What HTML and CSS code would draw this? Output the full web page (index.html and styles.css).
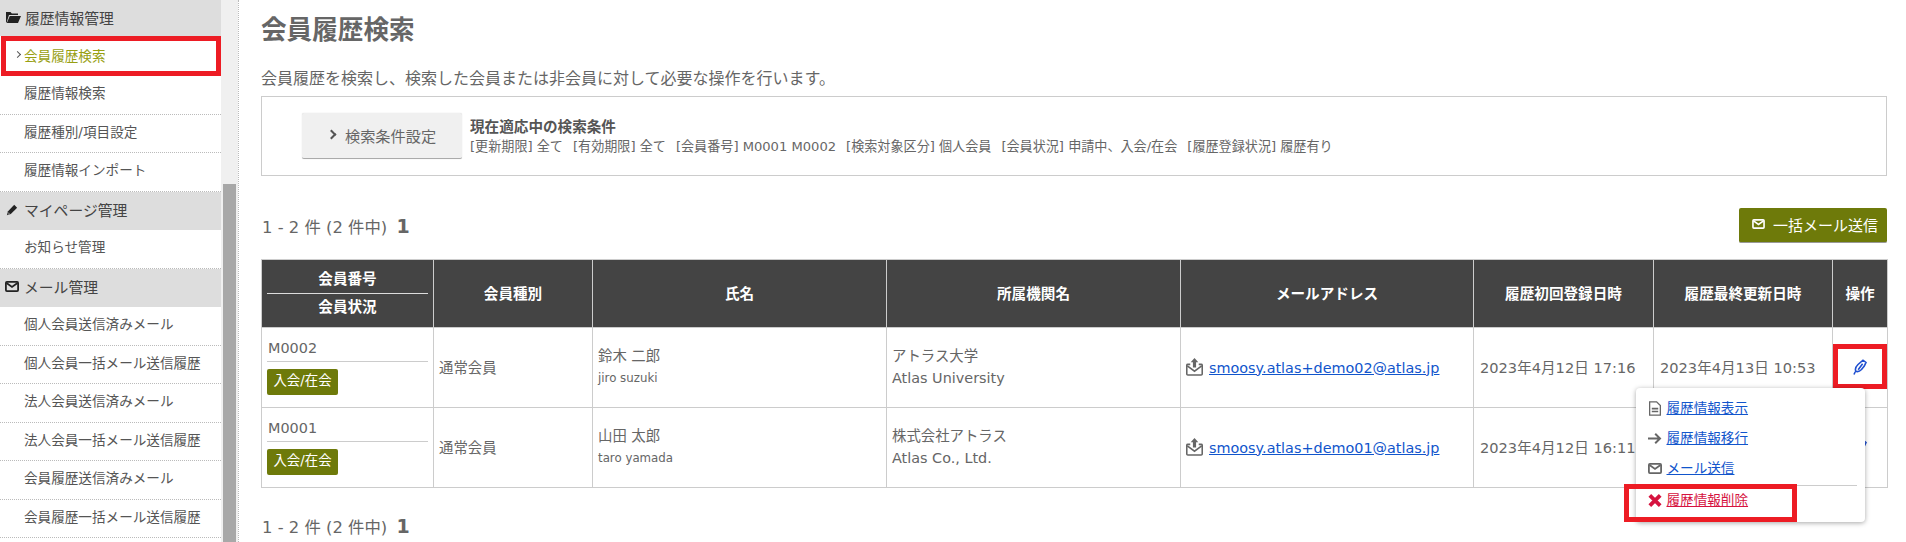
FILE: index.html
```html
<!DOCTYPE html>
<html lang="ja">
<head>
<meta charset="utf-8">
<title>会員履歴検索</title>
<link rel="stylesheet" href="styles.css">
</head>
<body>
<svg class="defs" width="0" height="0" aria-hidden="true">
  <symbol id="i-folder" viewBox="0 0 16 14"><path d="M1 12.5V2h4.5l1.3 1.5H13V5H4L1.6 12.5zM4.8 6H16l-3 7H1.8z" fill="currentColor"/></symbol>
  <symbol id="i-pencil" viewBox="0 0 14 14"><path d="M9.6 1l3.4 3.4-7.4 7.4L1 13.2l1.4-4.8z" fill="currentColor"/><path d="M2 12.4l1-3 2.2 2.2z" fill="#fff" opacity=".35"/></symbol>
  <symbol id="i-mail" viewBox="0 0 14 11"><rect x=".9" y=".9" width="12.2" height="9.2" rx="1" fill="none" stroke="currentColor" stroke-width="1.8"/><path d="M1.5 2l5.5 4 5.5-4" fill="none" stroke="currentColor" stroke-width="1.8"/></symbol>
  <symbol id="i-send" viewBox="0 0 16 17"><path d="M4 6H1.7a1 1 0 0 0-1 1v8a1 1 0 0 0 1 1h12.6a1 1 0 0 0 1-1V7a1 1 0 0 0-1-1H12" fill="none" stroke="currentColor" stroke-width="1.5"/><path d="M1.2 7.5L8 12.5l6.8-5" fill="none" stroke="currentColor" stroke-width="1.5"/><path d="M8 0l3.6 4H9.5v5h-3V4H4.4z" fill="currentColor"/></symbol>
  <symbol id="i-quill" viewBox="0 0 14 16"><path d="M1 15.5C1.5 14 2 13 3 12M2.6 11.4C2 9.5 3 7.5 5 5.5L10 1.2 13 3.4 11.3 7 8.5 10.5C6.5 12.5 4.5 13 2.9 12.3zM5.2 10.8L9.6 4.8" fill="none" stroke="currentColor" stroke-width="1.6"/></symbol>
  <symbol id="i-file" viewBox="0 0 12 14"><path d="M1 .8h6.5L11 4.3v8.9H1z" fill="none" stroke="currentColor" stroke-width="1.2"/><path d="M3 7.2h6M3 9.8h6" stroke="currentColor" stroke-width="1.6"/></symbol>
  <symbol id="i-arrow" viewBox="0 0 14 12"><path d="M0 6h11.5M7.2 1.2L12 6l-4.8 4.8" fill="none" stroke="currentColor" stroke-width="2"/></symbol>
  <symbol id="i-x" viewBox="0 0 14 14"><path d="M1.8 1.8l10.4 10.4M12.2 1.8L1.8 12.2" fill="none" stroke="currentColor" stroke-width="3.8"/></symbol>
</svg>
<div class="page">
  <nav class="sidebar">
    <div class="nav-head nav-head-first"><svg class="nav-icon folder"><use href="#i-folder"/></svg>履歴情報管理</div>
    <a class="nav-item active"><span class="chev"></span>会員履歴検索</a>
    <a class="nav-item">履歴情報検索</a>
    <a class="nav-item">履歴種別/項目設定</a>
    <a class="nav-item">履歴情報インポート</a>
    <div class="nav-head"><svg class="nav-icon pencil"><use href="#i-pencil"/></svg>マイページ管理</div>
    <a class="nav-item">お知らせ管理</a>
    <div class="nav-head"><svg class="nav-icon mail"><use href="#i-mail"/></svg>メール管理</div>
    <a class="nav-item">個人会員送信済みメール</a>
    <a class="nav-item">個人会員一括メール送信履歴</a>
    <a class="nav-item">法人会員送信済みメール</a>
    <a class="nav-item">法人会員一括メール送信履歴</a>
    <a class="nav-item">会員履歴送信済みメール</a>
    <a class="nav-item">会員履歴一括メール送信履歴</a>
  </nav>
  <div class="scroll"><div class="thumb"></div></div>
  <main class="main">
    <h1 class="title">会員履歴検索</h1>
    <p class="desc">会員履歴を検索し、検索した会員または非会員に対して必要な操作を行います。</p>
    <section class="cond">
      <button class="cond-btn"><span class="cond-chev"></span>検索条件設定</button>
      <div class="cond-text">
        <div class="cond-title">現在適応中の検索条件</div>
        <div class="cond-list"><span>[更新期限] 全て</span><span>[有効期限] 全て</span><span>[会員番号] M0001 M0002</span><span>[検索対象区分] 個人会員</span><span>[会員状況] 申請中、入会/在会</span><span>[履歴登録状況] 履歴有り</span></div>
      </div>
    </section>
    <div class="pager pager-top">
      <div class="count">1 - 2 件 (2 件中) <b class="pagenum">1</b></div>
      <button class="mail-btn"><svg class="mail-btn-icon"><use href="#i-mail"/></svg>一括メール送信</button>
    </div>
    <table class="grid">
      <colgroup><col class="c1"><col class="c2"><col class="c3"><col class="c4"><col class="c5"><col class="c6"><col class="c7"><col class="c8"></colgroup>
      <thead>
        <tr>
          <th><div class="th-top">会員番号</div><div class="th-bot">会員状況</div></th>
          <th>会員種別</th><th>氏名</th><th>所属機関名</th><th>メールアドレス</th><th>履歴初回登録日時</th><th>履歴最終更新日時</th><th>操作</th>
        </tr>
      </thead>
      <tbody>
        <tr>
          <td class="id-cell"><div class="mid">M0002</div><span class="badge">入会/在会</span></td>
          <td>通常会員</td>
          <td class="two"><div>鈴木 二郎</div><div class="sub">jiro suzuki</div></td>
          <td class="two"><div>アトラス大学</div><div>Atlas University</div></td>
          <td><svg class="send"><use href="#i-send"/></svg><a class="link">smoosy.atlas+demo02@atlas.jp</a></td>
          <td class="date">2023年4月12日 17:16</td>
          <td class="date">2023年4月13日 10:53</td>
          <td class="ops"><svg class="quill"><use href="#i-quill"/></svg><span class="mark-ops"></span>
            <div class="menu">
              <div class="menu-item"><svg class="mi file"><use href="#i-file"/></svg><a class="link">履歴情報表示</a></div>
              <div class="menu-item"><svg class="mi arrow"><use href="#i-arrow"/></svg><a class="link">履歴情報移行</a></div>
              <div class="menu-item"><svg class="mi envelope"><use href="#i-mail"/></svg><a class="link">メール送信</a></div>
              <div class="menu-sep"></div>
              <div class="menu-item danger"><svg class="mi cross"><use href="#i-x"/></svg><a class="link">履歴情報削除</a></div>
              <span class="mark-del"></span>
            </div>
          </td>
        </tr>
        <tr>
          <td class="id-cell"><div class="mid">M0001</div><span class="badge">入会/在会</span></td>
          <td>通常会員</td>
          <td class="two"><div>山田 太郎</div><div class="sub">taro yamada</div></td>
          <td class="two"><div>株式会社アトラス</div><div>Atlas Co., Ltd.</div></td>
          <td><svg class="send"><use href="#i-send"/></svg><a class="link">smoosy.atlas+demo01@atlas.jp</a></td>
          <td class="date">2023年4月12日 16:11</td>
          <td class="date">2023年4月13日 10:53</td>
          <td class="ops"><svg class="quill"><use href="#i-quill"/></svg></td>
        </tr>
      </tbody>
    </table>
    <div class="count count-bottom">1 - 2 件 (2 件中) <b class="pagenum">1</b></div>
  </main>
</div>
</body>
</html>
```
FILE: styles.css
```css
* { box-sizing: border-box; }
html, body { margin: 0; height: 542px; overflow: hidden; background: #fff; }
body { font-family: "DejaVu Sans", "Noto Sans CJK JP", sans-serif; color: #666; }
.defs { position: absolute; }
.page { display: flex; height: 542px; }

.sidebar { width: 221px; flex: none; font-size: 13.6px; color: #555; }
.nav-head { display: flex; align-items: center; height: 38.5px; padding-bottom: 2px; background: #ddd; font-size: 14.8px; color: #444; }
.nav-head-first { height: 36px; }
.nav-icon { flex: none; color: #222; }
.folder { width: 16px; height: 14px; margin: 0 4px 0 5px; }
.pencil { width: 12px; height: 12px; margin: 0 6px 0 6px; }
.mail { width: 14px; height: 11px; margin: 0 5px 0 5px; }
.nav-item { display: flex; align-items: center; height: 38.5px; padding: 0 0 5.5px 24px; border-bottom: 1px dotted #bbb; white-space: nowrap; }
.active { height: 40px; margin-left: 1px; padding: 0 0 3px 9px; border: 5px solid #ed1c24; color: #98a012; }
.chev { width: 5px; height: 5px; margin-right: 4px; border-top: 1px solid #555; border-right: 1px solid #555; transform: rotate(45deg); }

.scroll { width: 17px; flex: none; background: #f0f0f0; padding: 184px 2px 0; }
.thumb { height: 358px; background: #a8a8a8; }

.main { flex: 1; min-width: 0; border-left: 1px dotted #bbb; padding: 12px 19px 0 22px; }
.title { margin: 0 0 20px; font-size: 25.6px; line-height: 36px; font-weight: 700; color: #666; }
.desc { margin: 0 0 6px; font-size: 16px; line-height: 22px; }

.cond { display: flex; align-items: center; height: 80px; border: 1px solid #ccc; padding-left: 40px; }
.cond-btn { display: flex; align-items: center; justify-content: center; width: 160px; height: 46px; margin-right: 8px; padding: 0 0 2px; border: 0; border-bottom: 1px solid #aaa; border-radius: 2px; background: #f0f0f0; color: #666; font: inherit; font-size: 15.2px; box-shadow: 0 0 1px #ccc; }
.cond-chev { width: 7px; height: 7px; margin-right: 10px; border-top: 2px solid #555; border-right: 2px solid #555; transform: rotate(45deg); }
.cond-title { font-size: 14.6px; font-weight: 700; line-height: 20px; color: #555; margin-bottom: 1px; }
.cond-list { display: flex; gap: 10px; font-size: 13.1px; line-height: 18px; white-space: nowrap; }

.pager { display: flex; justify-content: space-between; align-items: center; }
.pager-top { margin-top: 32px; height: 35px; }
.count { font-size: 16.4px; line-height: 26px; padding: 2px 0 0 1px; }
.pagenum { font-size: 19px; margin-left: 4px; }
.mail-btn { display: flex; align-items: center; width: 148px; height: 35px; padding: 0 0 2px 13px; border: 0; border-bottom: 1px solid #999; border-radius: 2px; background: #6e7a0a; color: #fff; font: inherit; font-size: 15px; }
.mail-btn-icon { width: 13px; height: 10px; margin-right: 8px; }

.grid { width: 1626px; margin-top: 16px; border-collapse: collapse; table-layout: fixed; font-size: 14.4px; }
.c1 { width: 172px; } .c2 { width: 159px; } .c3 { width: 294px; } .c4 { width: 294px; }
.c5 { width: 293px; } .c6 { width: 180px; } .c7 { width: 179px; } .c8 { width: 55px; }
.grid th, .grid td { border: 1px solid #ccc; }
.grid th { height: 68px; padding: 0 5px 2px; background: #444; color: #fff; font-weight: 700; font-size: 14.6px; text-align: center; }
.th-top { padding-bottom: 2px; line-height: 24px; border-bottom: 1px solid #ddd; }
.th-bot { padding-top: 1px; line-height: 24px; }
.grid td { height: 80px; padding: 0 5px; line-height: 22px; white-space: nowrap; }
.grid td.id-cell { padding-bottom: 6px; }
.grid td.two { padding-bottom: 1px; }
.grid td.date { padding-left: 6px; font-size: 14.6px; }
.id-cell .mid { height: 28px; padding: 3px 0 0 1px; border-bottom: 1px solid #ccc; margin-bottom: 7px; font-size: 14.4px; }
.badge { display: block; width: 71px; height: 26px; border-radius: 2px; background: #6e7a0a; color: #fff; font-size: 13.4px; line-height: 24px; text-align: center; }
.sub { font-size: 11.8px; }
.link { color: #1155cc; text-decoration: underline; }
.send { width: 17px; height: 18px; margin-right: 6px; color: #666; vertical-align: -3px; }
.grid td.ops { position: relative; text-align: center; padding-bottom: 4px; }
.quill { width: 14px; height: 16px; color: #1f4fd0; vertical-align: middle; }
.mark-ops { position: absolute; left: 0; top: 16px; width: 54px; height: 45px; border: 5px solid #ed1c24; }

.menu { position: absolute; z-index: 5; top: 60px; right: 22px; width: 229px; height: 134px; padding-top: 6px; background: #fff; border-radius: 4px; box-shadow: 0 1px 5px rgba(0,0,0,.35); font-size: 13.6px; text-align: left; }
.menu-item { display: flex; align-items: center; height: 30px; padding: 0 0 2px 12px; }
.mi { flex: none; width: 14px; height: 15px; margin-right: 4.5px; color: #666; }
.menu-sep { height: 1px; margin: 1px 8px 0 0; background: #ccc; }
.danger .link { color: #d6133f; }
.cross { color: #d6133f; }
.mark-del { position: absolute; left: -12px; top: 96px; width: 173px; height: 38px; border: 5px solid #ed1c24; }

.count-bottom { margin-top: 23px; }
```
